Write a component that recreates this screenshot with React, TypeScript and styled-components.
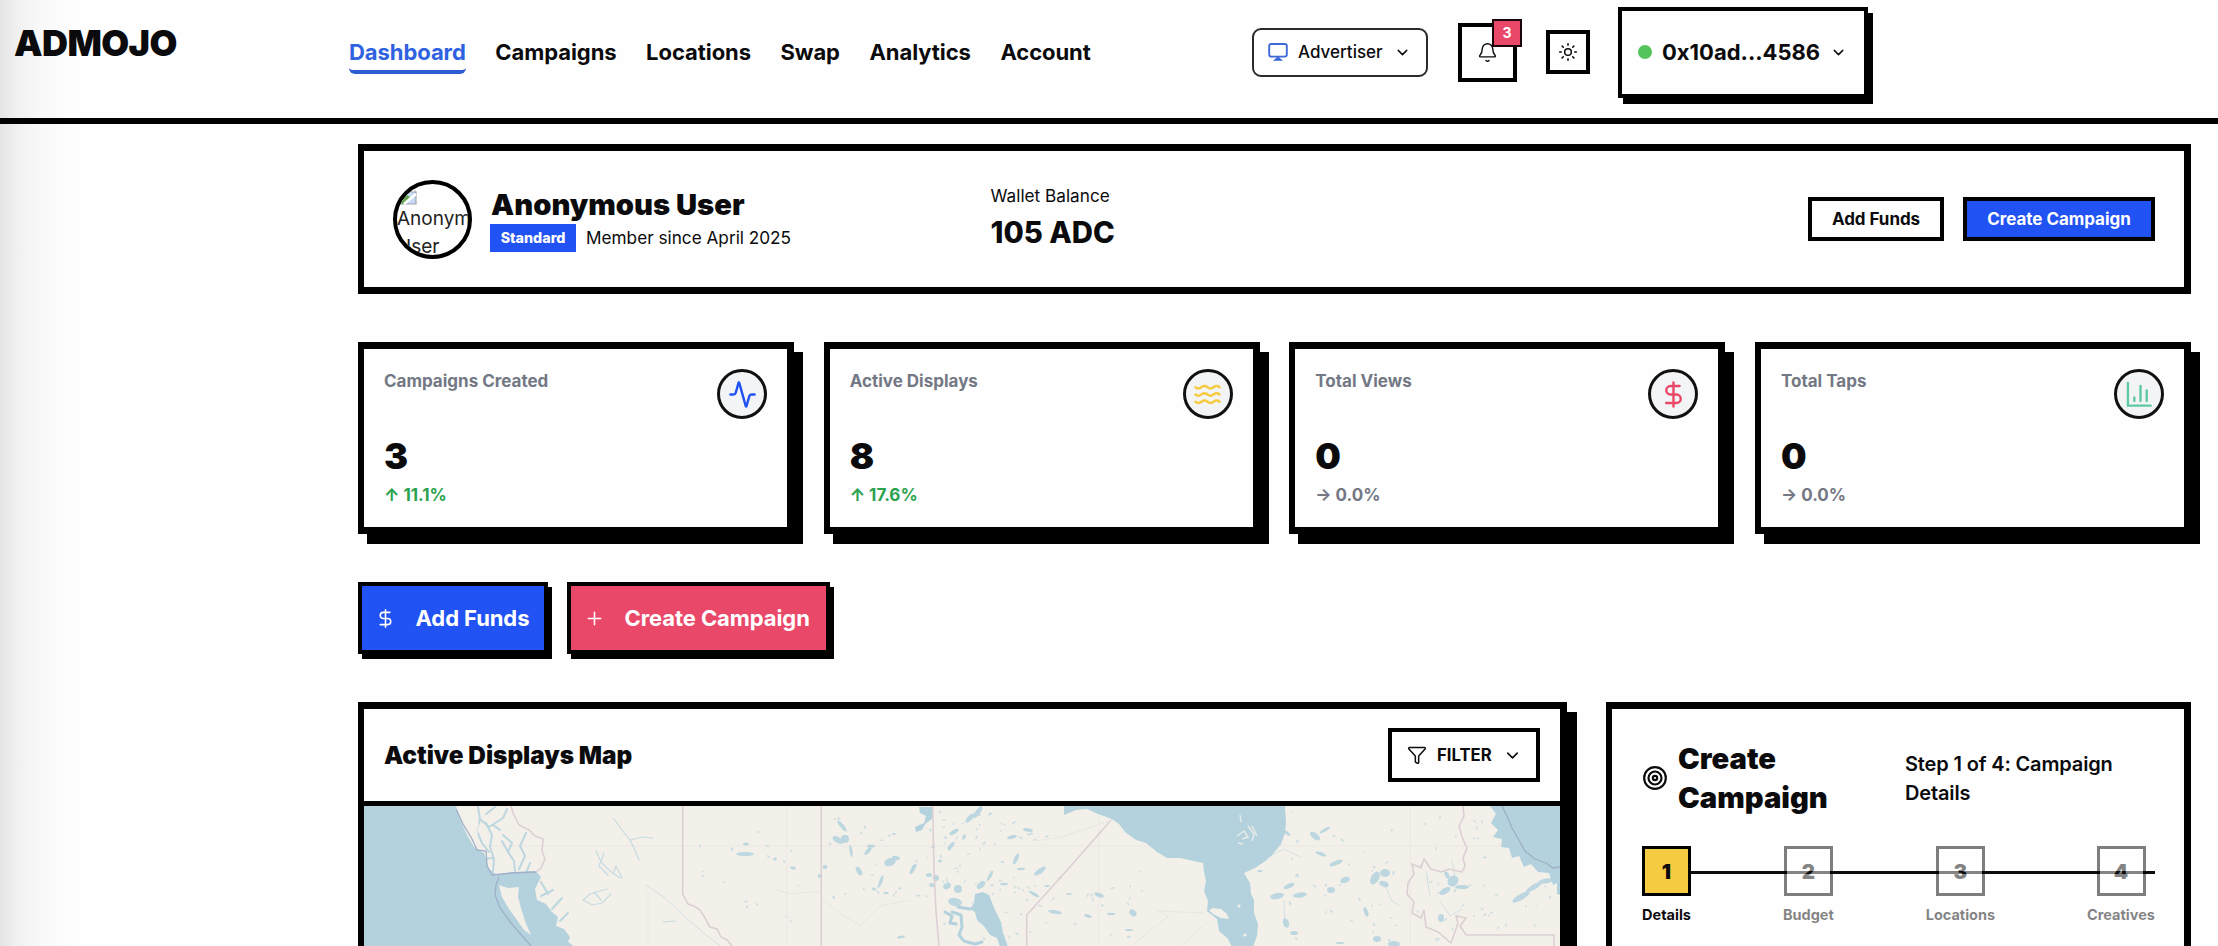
import React from "react";
import styled, { createGlobalStyle, css } from "styled-components";
import {
  Activity,
  Bell,
  ChevronDown,
  DollarSign,
  Funnel,
  Plus,
  Sun,
  Target,
  Waves,
} from "lucide-react";

const BLUE = "#2152f3";
const ROSE = "#ea4868";
const INK = "#0b0b0d";
const MUTED = "#737884";

const GlobalStyle = createGlobalStyle`
  *, *::before, *::after { box-sizing: border-box; }
  body {
    margin: 0;
    background: #fefefe;
    color: ${INK};
    font-family: Inter, "Liberation Sans", sans-serif;
    overflow: hidden;
  }
  button { font: inherit; color: inherit; margin: 0; padding: 0; }
  svg { display: block; flex: none; }
`;

const Page = styled.div`
  height: 946px;
  overflow: hidden;
  background: linear-gradient(90deg, #e4e4e4 0, #f1f1f1 18px, #f9f9f9 42px, #fefefe 78px);
`;

/* ---------- header ---------- */

const Header = styled.header`
  display: flex;
  height: 124px;
  padding: 0 350px 14px 14px;
  align-items: center;
  border-bottom: 6px solid #000;
`;

const Logo = styled.div`
  width: 335px;
  padding-bottom: 18px;
  font-size: 36px;
  line-height: 44px;
  font-weight: 900;
  letter-spacing: -0.6px;
`;

const Nav = styled.nav`
  display: flex;
  gap: 29.5px;
`;

const NavLink = styled.a<{ $active?: boolean }>`
  padding: 4px 0;
  border-bottom: 4px solid ${(p) => (p.$active ? "#2c5bd2" : "transparent")};
  border-radius: 0 0 6px 6px;
  margin-top: 3px;
  font-size: 22px;
  line-height: 28px;
  font-weight: 700;
  letter-spacing: -0.06px;
  color: ${(p) => (p.$active ? "#2f62e0" : INK)};
  white-space: nowrap;
`;

const Tools = styled.div`
  display: flex;
  align-items: center;
  gap: 28.5px;
  margin-left: auto;
`;

const RoleButton = styled.button`
  display: flex;
  align-items: center;
  width: 176px;
  height: 49px;
  margin-right: 1.5px;
  padding: 0 15px 0 14px;
  border: 2px solid #2b2b2b;
  border-radius: 9px;
  background: #fefefe;
  font-size: 17px;
  font-weight: 500;
`;

const RoleLabel = styled.span`
  flex: 1;
  padding-left: 10px;
  text-align: left;
`;

const SquareButton = styled.button<{ $size: number }>`
  position: relative;
  display: flex;
  align-items: center;
  justify-content: center;
  width: ${(p) => p.$size}px;
  height: ${(p) => p.$size}px;
  border: 4px solid #000;
  background: #fefefe;
`;

const CountBadge = styled.span`
  position: absolute;
  top: -8px;
  right: -9px;
  display: flex;
  align-items: center;
  justify-content: center;
  width: 30px;
  height: 28px;
  border: 2px solid #1a0508;
  background: ${ROSE};
  color: #fff;
  font-size: 14px;
  font-weight: 700;
`;

const WalletButton = styled.button`
  display: flex;
  align-items: center;
  width: 250px;
  height: 91px;
  padding: 0 17px 0 16px;
  border: 4px solid #000;
  background: #fefefe;
  box-shadow: 5px 6px 0 #000;
  font-size: 22px;
  font-weight: 700;
`;

const StatusDot = styled.span`
  width: 14px;
  height: 14px;
  border-radius: 50%;
  background: #53c45c;
`;

const WalletAddress = styled.span`
  flex: 1;
  padding-left: 10px;
  text-align: left;
`;

/* ---------- main ---------- */

const Main = styled.main`
  width: 1833px;
  margin-left: 358px;
  padding-top: 20px;
`;

const panel = css`
  border: 7px solid #000;
  border-left-width: 6px;
  background: #fefefe;
`;

const Profile = styled.section`
  ${panel}
  display: flex;
  align-items: center;
  height: 150px;
  padding: 0 29px;
`;

const Avatar = styled.div`
  width: 79px;
  height: 79px;
  border: 4px solid #000;
  border-radius: 50%;
  overflow: hidden;
  font-size: 19px;
  line-height: 28px;
  color: #222;
`;

const AvatarAlt = styled.div`
  width: 73px;
  padding-top: 2px;
`;

const AltLine = styled.div`
  white-space: nowrap;
`;

const Identity = styled.div`
  width: 499.5px;
  margin-left: 19px;
`;

const UserName = styled.h2`
  margin: 0;
  font-size: 29.2px;
  line-height: 36px;
  font-weight: 900;
`;

const Membership = styled.div`
  display: flex;
  align-items: center;
  gap: 10px;
  height: 28px;
  margin: 1px 0 0 -1px;
  font-size: 17.2px;
`;

const TierBadge = styled.span`
  width: 86px;
  height: 28px;
  background: ${BLUE};
  color: #fff;
  font-size: 14.3px;
  line-height: 28px;
  font-weight: 800;
  text-align: center;
`;

const Balance = styled.div`
  margin-top: -3px;
`;

const BalanceLabel = styled.div`
  font-size: 17.2px;
  line-height: 26px;
`;

const BalanceValue = styled.div`
  margin-top: 4px;
  font-size: 29.3px;
  line-height: 40px;
  font-weight: 800;
`;

const ProfileActions = styled.div`
  display: flex;
  gap: 19px;
  margin-left: auto;
`;

const SmallButton = styled.button<{ $primary?: boolean }>`
  width: ${(p) => (p.$primary ? 192 : 136)}px;
  height: 44px;
  border: 4px solid #000;
  background: ${(p) => (p.$primary ? BLUE : "#fefefe")};
  color: ${(p) => (p.$primary ? "#fff" : INK)};
  font-size: 17px;
  font-weight: 700;
  letter-spacing: -0.05px;
`;

const Stats = styled.section`
  display: grid;
  grid-template-columns: repeat(4, 436px);
  justify-content: space-between;
  margin-top: 48px;
`;

const StatCard = styled.article`
  ${panel}
  height: 192px;
  padding: 20px 20px 0 20px;
  box-shadow: 9px 10px 0 #000;
`;

const StatTop = styled.div`
  display: flex;
  justify-content: space-between;
  height: 65px;
`;

const StatLabel = styled.div`
  padding-top: 1.5px;
  font-size: 17px;
  line-height: 20px;
  font-weight: 700;
  color: ${MUTED};
`;

const StatIcon = styled.div<{ $color: string }>`
  display: flex;
  align-items: center;
  justify-content: center;
  width: 50px;
  height: 50px;
  border: 3px solid #111;
  border-radius: 50%;
  background: #f3f4f6;
  color: ${(p) => p.$color};
`;

const StatValue = styled.div`
  font-size: 36px;
  line-height: 44px;
  font-weight: 900;
`;

const StatChange = styled.div<{ $up: boolean }>`
  margin-top: 7px;
  font-size: 17px;
  line-height: 20px;
  font-weight: 700;
  color: ${(p) => (p.$up ? "#2ba24f" : MUTED)};
`;

const Actions = styled.section`
  display: flex;
  gap: 19px;
  margin-top: 48px;
`;

const ActionButton = styled.button<{ $fill: string; $width: number }>`
  display: flex;
  align-items: center;
  gap: 19.5px;
  width: ${(p) => p.$width}px;
  height: 72px;
  padding-left: 13px;
  border: 4px solid #000;
  background: ${(p) => p.$fill};
  box-shadow: 4px 5px 0 #000;
  color: #fff;
  font-size: 22px;
  font-weight: 700;
  letter-spacing: -0.08px;
  white-space: nowrap;
`;

const Columns = styled.section`
  display: flex;
  gap: 39px;
  margin-top: 48px;
`;

const MapCard = styled.article`
  ${panel}
  width: 1209px;
  height: 400px;
  box-shadow: 10px 10px 0 #000;
`;

const MapHeader = styled.div`
  display: flex;
  align-items: center;
  justify-content: space-between;
  height: 97px;
  padding: 0 20px;
  border-bottom: 5px solid #000;
`;

const MapTitle = styled.h3`
  margin: 0;
  font-size: 24.3px;
  font-weight: 900;
`;

const FilterButton = styled.button`
  display: flex;
  align-items: center;
  width: 152px;
  height: 54px;
  padding: 0 14px 0 15px;
  border: 4px solid #000;
  background: #fefefe;
  font-size: 16.7px;
  font-weight: 700;
`;

const FilterLabel = styled.span`
  flex: 1;
  padding-left: 10px;
  text-align: left;
`;

const Wizard = styled.article`
  ${panel}
  width: 585px;
  height: 400px;
  padding: 30px 29px 0 30px;
`;

const WizardHead = styled.div`
  display: flex;
  align-items: center;
  height: 78px;
`;

const WizardTitle = styled.h3`
  width: 237px;
  margin: 0;
  padding: 0 50px 0 10px;
  font-size: 29.2px;
  line-height: 39px;
  font-weight: 900;
`;

const WizardStep = styled.div`
  margin-top: 1px;
  font-size: 20px;
  line-height: 29px;
  font-weight: 600;
  letter-spacing: -0.15px;
`;

const Steps = styled.div`
  position: relative;
  display: flex;
  justify-content: space-between;
  margin-top: 29px;
`;

const StepLine = styled.div`
  position: absolute;
  top: 25px;
  left: 0;
  right: 0;
  height: 3px;
  background: #0c0c0c;
`;

const Step = styled.div<{ $current?: boolean }>`
  position: relative;
  display: flex;
  flex-direction: column;
  align-items: center;
  opacity: ${(p) => (p.$current ? 1 : 0.5)};
`;

const StepBox = styled.div<{ $current?: boolean }>`
  display: flex;
  align-items: center;
  justify-content: center;
  width: 49px;
  height: 50px;
  border: 3px solid #000;
  background: ${(p) => (p.$current ? "#f5cb42" : "#fefefe")};
  font-size: 20.5px;
  font-weight: 900;
`;

const StepLabel = styled.div`
  margin-top: 10px;
  font-size: 14.5px;
  line-height: 18px;
  font-weight: 700;
`;

/* ---------- drawings ---------- */

const MonitorIcon = () => (
  <svg width="20" height="20" viewBox="0 0 20 20" fill="none" stroke="#3f69d8" strokeWidth="1.9">
    <rect x="1.2" y="2" width="17.6" height="12.6" rx="2" />
    <path d="M6.5 18.2h7L10 15.2z" fill="#3f69d8" strokeWidth="1.2" />
  </svg>
);

const BrokenImage = () => (
  <svg width="20" height="19" viewBox="0 0 20 19">
    <path d="M1 1h13l5 5v12H1z" fill="#c9daf3" stroke="#9aa3ad" strokeWidth="1.2" />
    <path d="M1 18v-6l6-5 6 4-7 7z" fill="#66a54b" />
    <path d="M14 1v5h5" fill="#fff" stroke="#9aa3ad" />
    <path d="M19 8l-12 10" stroke="#fff" strokeWidth="2.5" />
  </svg>
);

const WATER = "#b3d2de";
const LAND = "#f3f0ea";

// x, y, half width, half height, tilt of the larger lakes
const LAKES: number[][] = [
  [745, 853, 9, 2, 0], [746, 843, 3, 1.5, 0], [793, 867, 3, 1.5, 20], [775, 858, 2, 1.5, 0],
  [842, 825, 7, 2, 50], [838, 839, 6, 3, 30], [845, 838, 4, 4, 0], [851, 850, 6, 1.5, 80],
  [868, 850, 5, 2, -50], [871, 845, 4, 1.5, 0], [890, 861, 6, 4, -20], [896, 857, 4, 2, 10],
  [859, 870, 5, 2.5, 60], [825, 866, 2.5, 2, 0], [820, 875, 2.5, 2, 0], [881, 880, 6, 1.7, -70],
  [874, 888, 2, 1.5, 0], [886, 892, 3, 1, 0], [913, 868, 6, 2, -60], [929, 874, 3, 2, 0],
  [936, 877, 3, 3, 0], [932, 884, 3, 2, 0], [940, 860, 2, 1.5, 0], [947, 885, 4, 3, -30],
  [958, 888, 4, 4, 0], [981, 884, 5, 3, -40], [990, 875, 6, 1.5, -60], [1004, 883, 4, 1.3, 0],
  [970, 817, 6, 2.5, -45], [978, 811, 7, 2.5, -55], [990, 813, 2, 1, -30], [954, 831, 5, 2, -30],
  [964, 836, 3, 1.5, -60], [951, 845, 5, 2, -50], [1012, 836, 5, 1.7, -15], [1028, 829, 5, 1.7, 10],
  [1016, 858, 6, 2, -65], [1021, 868, 4, 1.2, 0], [1040, 870, 7, 2.3, -35], [1034, 893, 6, 1.6, 30],
  [1047, 885, 3, 1, 0], [1055, 911, 7, 1.8, 10], [1069, 893, 3, 1, 0], [1099, 894, 5, 2, 20],
  [1088, 915, 4, 1.5, 20], [1111, 913, 4, 1.2, 0], [1133, 912, 4, 3, 40], [1129, 929, 4, 1, 0],
  [955, 901, 7, 4, 10], [901, 936, 4, 1.3, -10], [894, 833, 2, 1, 0], [933, 846, 2, 1, 0],
  [1315, 835, 6, 3, 40], [1325, 829, 6, 1.5, -30], [1321, 853, 6, 1.5, 20], [1336, 862, 7, 2.2, -20],
  [1345, 879, 5, 3, -20], [1331, 889, 4, 3, 0], [1277, 895, 7, 3, -10], [1289, 885, 6, 2.3, -25],
  [1300, 894, 7, 2.5, -10], [1375, 877, 4, 7, 30], [1385, 872, 5, 4, 0], [1384, 883, 5, 3, 20],
  [1286, 922, 5, 3, 70], [1294, 932, 4, 2, 0], [1366, 911, 2, 5, -20], [1445, 890, 6, 3, -30],
  [1453, 880, 5, 6, 40], [1462, 886, 7, 2, 0], [1447, 874, 4, 2, 60], [1441, 917, 3, 4, 0],
  [1521, 896, 10, 3, -30], [1534, 886, 9, 2.5, -30], [1546, 880, 8, 2.5, -10], [1377, 938, 4, 3, 0],
  [1394, 943, 6, 3, 0], [1287, 832, 4, 1.5, 40], [1260, 870, 3, 1, 0], [1340, 942, 4, 1, 0],
];

// deterministic scatter of ponds over the lake districts
const seeded = (seed: number) => () => {
  seed = (seed * 16807) % 2147483647;
  return seed / 2147483647;
};

const scatter = (seed: number, count: number, x: number, y: number, w: number, h: number) => {
  const next = seeded(seed);
  return Array.from({ length: count }, () => [
    x + next() * w,
    y + next() * h,
    0.8 + next() * 1.5,
    0.5 + next() * 0.7,
    next() * 160 - 80,
  ]);
};

const PONDS = [
  ...scatter(71, 60, 830, 812, 210, 90),
  ...scatter(23, 34, 940, 808, 110, 130),
  ...scatter(95, 18, 1040, 870, 110, 70),
  ...scatter(13, 60, 1290, 810, 195, 130),
  ...scatter(47, 16, 700, 825, 110, 110),
  ...scatter(31, 14, 1470, 880, 85, 55),
];

const Lake = ({ d }: { d: number[] }) => (
  <ellipse cx={d[0]} cy={d[1]} rx={d[2]} ry={d[3]} transform={`rotate(${d[4]} ${d[0]} ${d[1]})`} />
);

const DisplayMap = () => (
  <svg width="1196" height="141" viewBox="364 805 1196 141">
    <rect x="364" y="805" width="1196" height="141" fill={LAND} />
    <g stroke="#ebe8e4" strokeWidth="1" fill="none">
      <path d="M364 845H1560M787 805V946M1099 805V946M1410 805V946M648 890V946" />
    </g>
    <g fill={WATER}>
      <path d="M364 805H456L460 818 466 832 474 846 484 852 489 868 497 874 513 871 536 870 541 876 535 888 537 899 546 903 552 911 558 916 556 925 564 928 570 936 568 941 575 946H364Z" />
      <path d="M1064 805V814L1076 809 1087 808 1098 813 1112 818 1119 823 1125 831 1136 839 1146 842 1157 851 1167 857 1180 857 1203 862 1204 871 1206 880 1204 890 1208 900 1207 910 1217 918 1219 930 1228 938 1232 946H1253L1257 935 1258 923 1254 912 1254 899 1251 893 1250 882 1244 872 1255 867 1264 861 1273 853 1281 843 1285 832 1286 822 1285 805Z" />
      <path d="M1490 805 1496 813 1491 822 1498 829 1493 836 1502 838 1501 846 1509 847 1512 857 1519 855 1524 866 1531 863 1538 871 1549 872 1553 884 1557 882 1557 893 1560 894V805Z" />
      <path d="M919 806H933L932 818 925 823 922 829 916 831 915 826 924 822 926 815 920 812Z" />
      <path d="M975 893 983 891 989 894 995 909 1001 921 1003 932 1008 946H1000L997 937 990 934 984 925 977 919 975 911 970 908 974 902Z" />
      <g opacity="0.85">
        {LAKES.map((d, i) => (
          <Lake key={i} d={d} />
        ))}
      </g>
      <g opacity="0.6">
        {PONDS.map((d, i) => (
          <Lake key={i} d={d} />
        ))}
      </g>
    </g>
    <g stroke={WATER} fill="none" strokeLinecap="round" strokeLinejoin="round">
      <path
        strokeWidth="3"
        d="M945 911 952 915 950 922 956 923M952 911 961 914 962 926 959 934 964 940 975 943 982 941M958 906 970 908"
      />
      <path
        strokeWidth="2"
        opacity="0.85"
        d="M478 806 480 818 489 826 503 817 507 808M480 818 477 830 482 842 489 851M486 822 492 834 490 846 494 858 493 871M503 834 512 842 508 851 514 860 515 870M495 806 486 813M500 829 493 824M526 832 520 845 525 855 519 868M508 851 502 840M541 881 548 893M541 895 553 889M552 908 562 897M560 920 568 912M492 857 483 858M530 862 526 872"
      />
      <path
        strokeWidth="1.2"
        opacity="0.7"
        d="M614 818 622 829 630 839 634 847 639 859M631 839 642 836 653 837M596 850 601 861 610 870 620 877M604 852 599 865 608 874M613 873 616 865 622 877M583 899 590 893 600 890 607 888M583 899 592 904 602 902 611 893M594 891 601 899M663 921 676 920"
      />
      <path
        strokeWidth="1"
        opacity="0.5"
        d="M1270 855 1284 848 1300 856M1284 900 1285 925M1385 885 1392 900 1400 905M1426 870 1430 895M1440 900 1450 915 1462 908M1455 875 1452 860M646 884 664 896 684 915 706 934 722 946"
      />
    </g>
    <g fill={LAND}>
      <path d="M499 884 508 887 519 886 518 896 521 907 525 920 531 934 524 929 517 919 509 908 502 896Z" />
      <path d="M1209 909 1213 907 1221 908 1227 913 1229 918 1221 917 1213 913Z" />
      <circle cx="1239" cy="905" r="1.6" />
      <circle cx="1245" cy="934" r="1.6" />
      <path d="M468 808 474 809 481 829 476 834 471 826Z" opacity="0.7" />
    </g>
    <path
      d="M1240 814 1241 821M1248 825 1254 833 1252 840M1252 825 1257 835M1237 835 1244 830 1248 836 1242 838M1238 842 1243 843"
      stroke={LAND}
      strokeWidth="1.5"
      opacity="0.8"
      fill="none"
    />
    <path
      d="M456 808 463 823 472 838 477 849 486 850 487 865 492 874 512 872 536 871M499 876 496 884 495 894 500 907 511 922 524 937 532 946M1502 805 1507 815 1512 827 1519 839 1525 850 1535 858 1546 862 1553 867 1560 866"
      stroke="#9fb0c8"
      strokeWidth="1.3"
      fill="none"
    />
    <g stroke="#dccfd4" strokeWidth="1.6" fill="none">
      <path d="M511 805 513 812 519 824 529 829 535 835 543 838 542 850 545 858 541 867 536 871" />
      <path d="M682.7 805V893L688 903 694 905 700 909 705 917 710 926 717 928 721 936 727 939 733 946" />
      <path d="M821.3 805V946M932.7 805 934 870 936 910 939 946" />
      <path d="M1112 818 1069 867 1026.7 914V946" />
      <path d="M1463 805 1464 815 1459 825 1462 836 1467 847 1463 857 1465 865 1462 871 1449 868 1441 871 1431 868 1424 858 1421 867 1412 863 1414 873 1408 882 1407 893 1414 901 1412 912 1421 917 1424 909 1426 926 1438 931 1451 942 1458 922 1456 915 1466 917 1460 925 1466 934H1554V946" />
    </g>
    <g stroke="#e9e5e1" fill="none">
      <path d="M1035 840 1062 836 1112 819M1130 946 1168 915 1158 910 1205 912M1180 946 1207 921M821 890 790 893 775 888M822 898 840 912 860 925 880 905 910 899" />
    </g>
  </svg>
);

const BarsIcon = () => (
  <svg width="28" height="28" viewBox="0 0 24 24" fill="none" stroke="currentColor" strokeWidth="2" strokeLinecap="round">
    <path d="M2.5 2.5v19.5h19.5" />
    <path d="M8 18v-3M13.3 18V5M18.6 18V9" />
  </svg>
);

/* ---------- data ---------- */

const NAV = ["Dashboard", "Campaigns", "Locations", "Swap", "Analytics", "Account"];

const STATS = [
  { label: "Campaigns Created", value: "3", change: "↑ 11.1%", up: true, color: BLUE, Icon: Activity },
  { label: "Active Displays", value: "8", change: "↑ 17.6%", up: true, color: "#f5cb42", Icon: Waves },
  { label: "Total Views", value: "0", change: "→ 0.0%", up: false, color: ROSE, Icon: DollarSign },
  { label: "Total Taps", value: "0", change: "→ 0.0%", up: false, color: "#5cc9a0", Icon: null },
];

const STEPS = ["Details", "Budget", "Locations", "Creatives"];

export default function App() {
  return (
    <Page>
      <GlobalStyle />
      <Header>
        <Logo>ADMOJO</Logo>
        <Nav>
          {NAV.map((item, i) => (
            <NavLink key={item} $active={i === 0}>
              {item}
            </NavLink>
          ))}
        </Nav>
        <Tools>
          <RoleButton>
            <MonitorIcon />
            <RoleLabel>Advertiser</RoleLabel>
            <ChevronDown size={17} strokeWidth={2} />
          </RoleButton>
          <SquareButton $size={59}>
            <Bell size={21} strokeWidth={1.6} />
            <CountBadge>3</CountBadge>
          </SquareButton>
          <SquareButton $size={44}>
            <Sun size={20} strokeWidth={1.8} />
          </SquareButton>
          <WalletButton>
            <StatusDot />
            <WalletAddress>0x10ad...4586</WalletAddress>
            <ChevronDown size={17} strokeWidth={2} />
          </WalletButton>
        </Tools>
      </Header>

      <Main>
        <Profile>
          <Avatar>
            <AvatarAlt>
              <BrokenImage />
              <AltLine>Anonymous</AltLine>
              <AltLine>User</AltLine>
            </AvatarAlt>
          </Avatar>
          <Identity>
            <UserName>Anonymous User</UserName>
            <Membership>
              <TierBadge>Standard</TierBadge>
              Member since April 2025
            </Membership>
          </Identity>
          <Balance>
            <BalanceLabel>Wallet Balance</BalanceLabel>
            <BalanceValue>105 ADC</BalanceValue>
          </Balance>
          <ProfileActions>
            <SmallButton>Add Funds</SmallButton>
            <SmallButton $primary>Create Campaign</SmallButton>
          </ProfileActions>
        </Profile>

        <Stats>
          {STATS.map(({ label, value, change, up, color, Icon }) => (
            <StatCard key={label}>
              <StatTop>
                <StatLabel>{label}</StatLabel>
                <StatIcon $color={color}>{Icon ? <Icon size={29} strokeWidth={2} /> : <BarsIcon />}</StatIcon>
              </StatTop>
              <StatValue>{value}</StatValue>
              <StatChange $up={up}>{change}</StatChange>
            </StatCard>
          ))}
        </Stats>

        <Actions>
          <ActionButton $fill={BLUE} $width={190}>
            <DollarSign size={21} strokeWidth={1.8} />
            Add Funds
          </ActionButton>
          <ActionButton $fill={ROSE} $width={263}>
            <Plus size={21} strokeWidth={1.8} />
            Create Campaign
          </ActionButton>
        </Actions>

        <Columns>
          <MapCard>
            <MapHeader>
              <MapTitle>Active Displays Map</MapTitle>
              <FilterButton>
                <Funnel size={20} strokeWidth={1.8} />
                <FilterLabel>FILTER</FilterLabel>
                <ChevronDown size={19} strokeWidth={2} />
              </FilterButton>
            </MapHeader>
            <DisplayMap />
          </MapCard>

          <Wizard>
            <WizardHead>
              <Target size={26} strokeWidth={2} />
              <WizardTitle>Create Campaign</WizardTitle>
              <WizardStep>
                Step 1 of 4: Campaign
                <br />
                Details
              </WizardStep>
            </WizardHead>
            <Steps>
              <StepLine />
              {STEPS.map((step, i) => (
                <Step key={step} $current={i === 0}>
                  <StepBox $current={i === 0}>{i + 1}</StepBox>
                  <StepLabel>{step}</StepLabel>
                </Step>
              ))}
            </Steps>
          </Wizard>
        </Columns>
      </Main>
    </Page>
  );
}
